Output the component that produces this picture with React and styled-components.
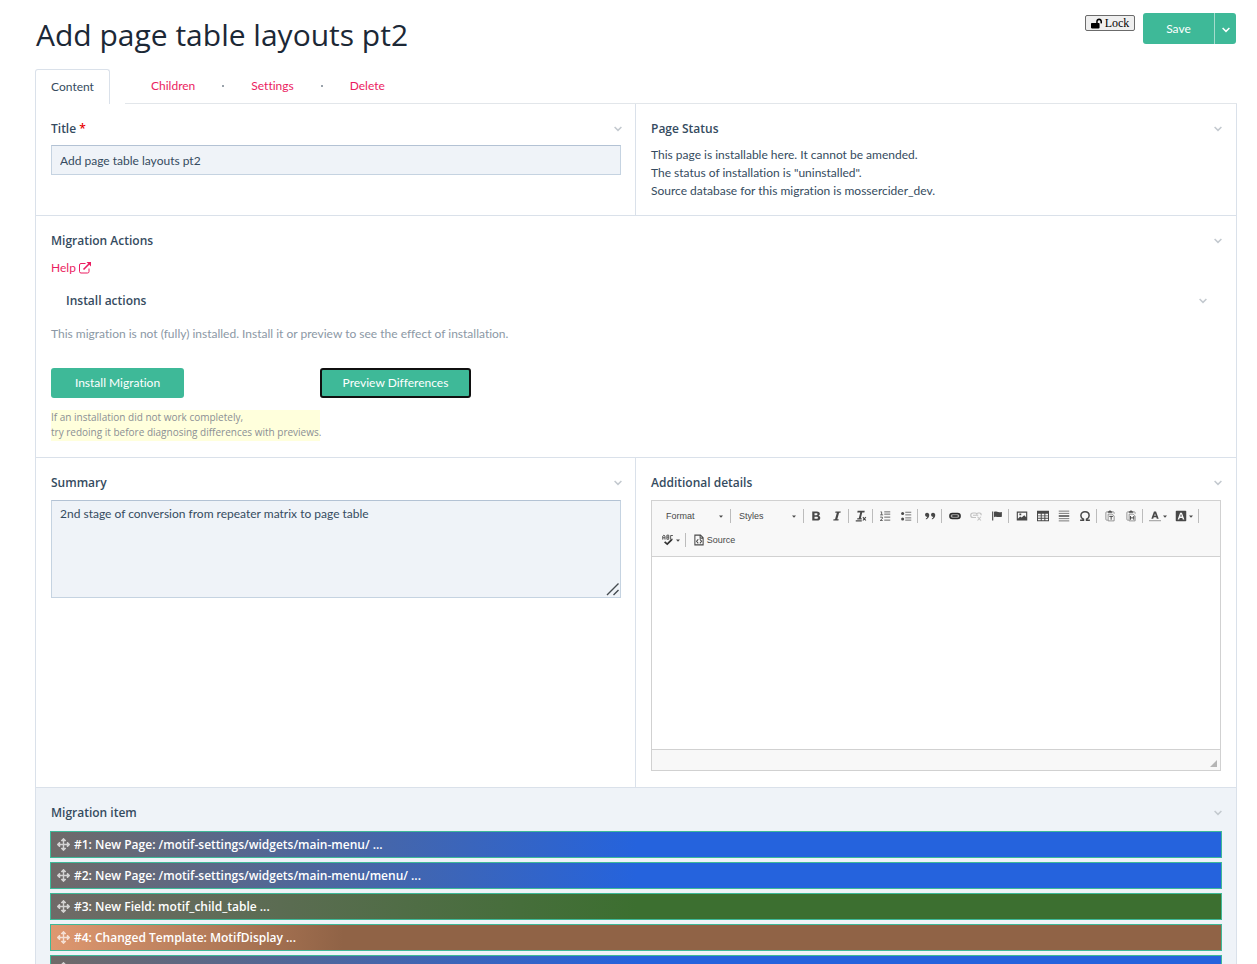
import React from 'react';
import styled, { createGlobalStyle, css } from 'styled-components';
import { FaLockOpen, FaArrowsAlt } from 'react-icons/fa';

const Global = createGlobalStyle`
  * { box-sizing: border-box; }
  body {
    margin: 0;
    background: #fff;
    color: #354b60;
    font: 12px/18px Lato, "Open Sans", sans-serif;
    font-variant-ligatures: none;
  }
  button, input, textarea, select { font: inherit; color: inherit; font-variant-ligatures: none; }
`;

const line = '#dae1ea';
const green = '#3eb998';
const pink = '#eb1d61';
const boldFace = css`
  font-family: "Open Sans", "Noto Sans", sans-serif;
  font-weight: 600;
`;

const Page = styled.div`
  height: 100vh;
  overflow: hidden;
  padding: 13px 20px 0 35px;
`;
const Header = styled.header`
  display: flex;
  align-items: flex-start;
  height: 56px;
`;
const Heading = styled.h1`
  flex: 1;
  margin: 0;
  padding-left: 1px;
  font-family: "Open Sans", "Noto Sans", sans-serif;
  font-size: 30px;
  line-height: 43px;
  font-weight: 400;
  color: #1c2836;
`;
const LockButton = styled.button`
  display: flex;
  align-items: center;
  justify-content: center;
  gap: 3px;
  width: 50px;
  height: 16px;
  margin: 2px 8px 0 0;
  padding: 0;
  border: 1px solid #6b6b6b;
  border-radius: 2px;
  background: #efefef;
  color: #000;
  font: 12px/14px "Liberation Serif", serif;
`;
const SaveGroup = styled.div`
  display: flex;
  height: 31px;
  margin-right: 1px;
  border-radius: 3px;
  overflow: hidden;
`;
const SaveButton = styled.button`
  width: 71px;
  padding: 0;
  border: 0;
  background: ${green};
  color: #fff;
`;
const SaveMore = styled(SaveButton)`
  width: 22px;
  border-left: 1px solid #a5dccd;
`;

const TabBar = styled.nav`
  display: flex;
  height: 35px;
`;
const ActiveTab = styled.a`
  width: 75px;
  margin-right: 15px;
  padding-top: 8px;
  border: 1px solid ${line};
  border-bottom: 0;
  border-radius: 3px 3px 0 0;
  text-align: center;
  text-decoration: none;
  color: #354b60;
`;
const TabList = styled.div`
  flex: 1;
  display: flex;
  align-items: center;
  gap: 27px;
  padding-left: 26px;
  border-bottom: 1px solid #e2e6ea;
`;
const TabLink = styled.a`
  color: ${pink};
  text-decoration: none;
`;
const Dot = styled.span`
  width: 2px;
  height: 2px;
  background: #9aa3ab;
`;

const Form = styled.main`
  border: solid ${line};
  border-width: 0 1px;
`;
const Row = styled.div`
  display: grid;
  grid-template-columns: ${(p) => (p.$split ? 'calc(50% - 1px) minmax(0, 1fr)' : 'minmax(0, 1fr)')};
  border-bottom: 1px solid ${line};
`;
const Cell = styled.section`
  padding: 15px 15px ${(p) => p.$bottom || 16}px;
  background: ${(p) => (p.$shaded ? '#eff3f8' : '#fff')};
  & + & { border-left: 1px solid ${line}; }
  ${Row} > &:first-child:not(:last-child) { padding-right: 14px; }
`;
const LabelRow = styled.div`
  ${boldFace}
  display: flex;
  align-items: center;
  justify-content: space-between;
  height: 20px;
  margin: 0 -1px ${(p) => p.$gap || 7}px 0;
  padding: 0 ${(p) => (p.$inset ? 15 : 0)}px;
  color: #354b60;
`;
const Required = styled.span`
  color: #e80000;
`;
const StatusText = styled.p`
  margin: 0;
  color: #354b60;
`;
const fieldBox = css`
  display: block;
  width: 100%;
  margin: 0;
  border: 1px solid #c5d3e1;
  border-top-color: #b3c2d4;
  border-radius: 0;
  outline: 0;
  background: #eff3f8;
`;
const TextInput = styled.input`
  ${fieldBox}
  height: 30px;
  padding: 0 8px;
`;
const AreaWrap = styled.div`
  position: relative;
`;
const TextArea = styled.textarea`
  ${fieldBox}
  height: 98px;
  padding: 4px 8px;
  resize: none;
`;
const Grip = styled.svg`
  position: absolute;
  right: 1px;
  bottom: 2px;
`;
const HelpLink = styled.a`
  display: flex;
  align-items: center;
  gap: 3px;
  height: 20px;
  width: max-content;
  margin-bottom: 13px;
  color: ${pink};
  text-decoration: none;
`;
const Muted = styled.p`
  margin: 0 0 24px;
  line-height: 20px;
  color: #8b98a5;
`;
const Actions = styled.div`
  display: flex;
  align-items: flex-start;
`;
const InstallColumn = styled.div`
  width: 269px;
`;
const ActionButton = styled.button`
  width: ${(p) => (p.$focused ? 151 : 133)}px;
  height: 30px;
  padding: 0;
  border: ${(p) => (p.$focused ? '2px solid #101010' : '0')};
  border-radius: 3px;
  background: ${green};
  color: #fff;
`;
const Note = styled.p`
  margin: 12px 0 0;
  background: #ffffdc;
  color: #8b8f94;
  font-family: "Open Sans", "Noto Sans", sans-serif;
  font-size: 10px;
  line-height: 15px;
  padding-bottom: 1px;
  white-space: nowrap;
`;

const Editor = styled.div`
  border: 1px solid #d1d1d1;
`;
const Toolbar = styled.div`
  height: 56px;
  padding: 3px 6px 0;
  border-bottom: 1px solid #d1d1d1;
  background: #f8f8f8;
  color: #484848;
  font: 9px/12px "Liberation Sans", sans-serif;
`;
const ToolRow = styled.div`
  display: flex;
  align-items: center;
  height: 24px;
`;
const Tool = styled.button`
  display: flex;
  flex: none;
  align-items: center;
  justify-content: center;
  gap: 2px;
  width: ${(p) => p.$w || 21}px;
  height: 20px;
  padding: 0;
  border: 0;
  background: none;
  opacity: ${(p) => (p.$dim ? 0.3 : 1)};
`;
const Separator = styled.span`
  flex: none;
  width: 1px;
  height: 14px;
  margin: 0 ${(p) => (p.$wide ? 2 : 1)}px 0 1px;
  background: #bcbcbc;
`;
const Combo = styled.label`
  flex: none;
  display: flex;
  align-items: center;
  width: ${(p) => p.$w}px;
  padding: 0 6px 0 ${(p) => p.$left}px;
`;
const Select = styled.select`
  flex: 1;
  min-width: 0;
  padding: 0;
  border: 0;
  appearance: none;
  background: none;
`;
const EditArea = styled.textarea`
  display: block;
  width: 100%;
  height: 192px;
  border: 0;
  outline: 0;
  resize: none;
  background: #fff;
`;
const EditorFoot = styled.div`
  display: flex;
  justify-content: flex-end;
  align-items: flex-end;
  height: 21px;
  padding: 3px;
  border-top: 1px solid #d1d1d1;
  background: #f8f8f8;
`;

const ItemList = styled.ul`
  display: flex;
  flex-direction: column;
  gap: 4px;
  margin: 0 -1px;
  padding: 0;
  list-style: none;
`;
const fills = {
  page: 'linear-gradient(95deg, #6f6a68, #2563dd 50%)',
  field: 'linear-gradient(95deg, #6f6a68, #3c6f30 50%)',
  template: 'linear-gradient(95deg, #df9870, #906346 25%)',
};
const Item = styled.li`
  ${boldFace}
  display: flex;
  align-items: center;
  gap: 4px;
  height: 27px;
  padding: 0 7px 0 6px;
  border: 1px solid ${green};
  background: ${(p) => fills[p.$kind]};
  color: #fff;
  svg { opacity: 0.7; }
`;

const Chevron = ({ color = '#c3c9cf' }) => (
  <svg width="8" height="6" viewBox="0 0 8 6" fill="none" stroke={color} strokeWidth="1.5" aria-hidden="true">
    <path d="M.6 1 4 4.400 7.400 1" />
  </svg>
);
const Caret = () => (
  <svg width="4" height="3" viewBox="0 0 4 3" aria-hidden="true">
    <path d="M0 .5h4L2 2.700z" fill="#484848" />
  </svg>
);
const External = () => (
  <svg width="12" height="12" viewBox="0 0 12 12" fill="none" stroke={pink} aria-hidden="true">
    <path d="M6.500 1.500H2A1.500 1.500 0 0 0 .5 3v6.500A1.500 1.500 0 0 0 2 11h6.500a1.500 1.500 0 0 0 1.500-1.500V6.500" />
    <path d="m4.500 7.500 5.500-5.500" strokeWidth="1.600" />
    <path d="M7.500 0H12v4.500z" fill={pink} stroke="none" />
  </svg>
);

const Clipboard = (
  <>
    <path d="M5 2.500H3.500a1 1 0 0 0-1 1v9a1 1 0 0 0 1 1H5M11 2.500h1.500a1 1 0 0 1 1 1V5" fill="none" stroke="#777" />
    <path d="M5 1.500h6v2.300H5zM7 .5h2v2H7z" />
    <path d="M5.500 5.500h5.500l2.500 2.500v6.500h-8z" fill="#f8f8f8" stroke="#777" />
  </>
);
const glyphs = {
  bold: <path fillRule="evenodd" d="M3 2h6.200c2.500 0 3.900 1.200 3.900 3.100 0 1.300-.7 2.200-1.900 2.600 1.600.3 2.500 1.400 2.500 2.900 0 2.200-1.600 3.400-4.400 3.400H3zm3 2.200v2.700h2.400c1.100 0 1.700-.5 1.700-1.400 0-.9-.6-1.300-1.700-1.300zm0 4.700v2.900h2.700c1.200 0 1.900-.5 1.900-1.500 0-.9-.7-1.400-1.900-1.400z" />,
  italic: <path d="M6 2h7l-.4 1.700h-1.800L8.400 12.300h1.900L9.900 14H3l.4-1.700h2L7.800 3.700H5.600z" />,
  clear: (
    <>
      <path d="M3.500 1h9.500l-.5 2.200H9.600L7.800 11H9v1.800H3V11h2L7 3.200H3z" />
      <path d="m10.500 9.500 4 4.500m0-4.500-4 4.500M1 14.500h8" fill="none" stroke="#484848" strokeWidth="1.500" />
    </>
  ),
  numbered: (
    <path d="M7 2.500h8M7 5.500h8M7 9.500h8M7 13.500h8M2 2.500h1.500v4M1.500 6.500h4M1.500 9.500h3v2l-3 2.500H5" fill="none" stroke="#5a5a5a" strokeWidth="1.200" />
  ),
  bullets: (
    <>
      <path d="M7 3h8M7 6.500h8M7 10.500h8M7 13.500h8" fill="none" stroke="#666" strokeWidth="1.200" />
      <circle cx="3.500" cy="4.700" r="2" /><circle cx="3.500" cy="12" r="2" />
    </>
  ),
  quote: (
    <path d="M4 3.500c2 0 3 1.400 3 3.300 0 3-1.700 5-4.500 6v-1.600c1.200-.6 1.800-1.400 1.900-2.200-1.900 0-3-1.100-3-2.700C1.400 4.600 2.500 3.500 4 3.500zm8 0c2 0 3 1.400 3 3.300 0 3-1.700 5-4.500 6v-1.600c1.200-.6 1.800-1.400 1.900-2.200-1.900 0-3-1.100-3-2.700 0-1.700 1.100-2.800 2.600-2.800z" />
  ),
  link: (
    <>
      <path d="M4.500 4.700h7a3.300 3.300 0 0 1 0 6.600h-7a3.300 3.300 0 0 1 0-6.600z" fill="#aaa" stroke="#2c2c2c" strokeWidth="2" />
      <path d="M4.500 7h7v2h-7z" fill="#222" />
    </>
  ),
  unlink: (
    <>
      <path d="M8 10H4a3 3 0 0 1 0-6h3a2 2 0 0 1 2 2 2 2 0 0 1 2-2h1.500a2 2 0 0 1 2 3M4 7h7" fill="none" stroke="#484848" strokeWidth="1.600" />
      <path d="m10 9 4.500 5m0-5L10 14" fill="none" stroke="#484848" strokeWidth="1.400" />
    </>
  ),
  flag: <path d="M1.500 2h1.500v12H1.500zM4 2.500c3-1.300 4.500 1.300 10.500 0V9c-5 1.500-7.500-1.200-10.500.5z" />,
  image: <path fillRule="evenodd" d="M1 2h14v12H1zm1.500 1.500v8l3-3 2 1.500 3.500-3 2.500 2.500V3.500zm2 1h2.500v2.500H4.500z" />,
  table: <path fillRule="evenodd" d="M0 1h16v14H0zm1.300 4v2.200h3.700V5zm5 0v2.200h3.500V5zm4.800 0v2.200h3.600V5zM1.300 8.400v2h3.700v-2zm5 0v2h3.500v-2zm4.800 0v2h3.600v-2zM1.300 11.700v2h3.700v-2zm5 0v2h3.500v-2zm4.800 0v2h3.600v-2z" />,
  rule: (
    <>
      <path d="M1 1.500h14M1 4.500h14M1 11.500h14M1 14.500h14" fill="none" stroke="#777" strokeWidth="1.300" />
      <path d="M1 7h14v2H1z" />
    </>
  ),
  omega: <path d="M1.500 13.500H6v-1.200C3.800 11.200 2.500 9.700 2.500 7.500 2.500 4.300 4.800 2.300 8 2.300s5.500 2 5.500 5.200c0 2.200-1.300 3.700-3.500 4.800v1.200h4.500" fill="none" stroke="#484848" strokeWidth="2" />,
  pasteText: <>{Clipboard}<path d="M7 8.500h5M9.500 8.500v4.500" fill="none" stroke="#484848" strokeWidth="1.300" /></>,
  pasteWord: <>{Clipboard}<path d="M7.300 8v5M11.700 8v5M7.300 10.500h4.400" fill="none" stroke="#484848" strokeWidth="1.300" /></>,
  color: (
    <>
      <path fillRule="evenodd" d="M6.600 2h2.800l3.500 9.500h-2.500l-.7-2H6.300l-.7 2H3.100zm.4 5.500h2L8 4.600z" />
      <path d="M0 14.200h16" stroke="#aaa" strokeWidth="1.600" />
    </>
  ),
  fill: <path fillRule="evenodd" d="M2 1h12a1 1 0 0 1 1 1v12a1 1 0 0 1-1 1H2a1 1 0 0 1-1-1V2a1 1 0 0 1 1-1zm4.800 2.500L3.500 12.500h2.100l.6-2h3.600l.6 2h2.100L9.200 3.500zm0 5.300L8 5.300l1.200 3.500z" />,
  spell: (
    <>
      <path d="M1 7.500V2.800L2.500 1.500 4 2.800v4.700M1 5h3M6.500 1.500v5.500h2.500V1.500zM6.500 4.200H9M14.500 2h-3v5h3" fill="none" stroke="#484848" strokeWidth="1.200" />
      <path d="m3.500 10.500 3.500 3 6-6" fill="none" stroke="#333" strokeWidth="2.400" />
    </>
  ),
  source: (
    <path d="M2.500 1.500h7.500l3.500 3.500v9.500h-11zM9.500 1.500V5.500h4M7 7l-2.200 2.800L7 12.500M9.200 7l2.200 2.800-2.200 2.700" fill="none" stroke="#484848" strokeWidth="1.400" />
  ),
};
const Glyph = ({ name }) => (
  <svg width="12" height="12" viewBox="0 0 16 16" fill="#484848" aria-hidden="true">{glyphs[name]}</svg>
);

const groups = [
  ['bold', 'italic'],
  ['clear'],
  ['numbered', 'bullets'],
  ['quote'],
  ['link', 'unlink', 'flag'],
  ['image', 'table', 'rule', 'omega'],
  ['pasteText', 'pasteWord'],
];
const items = [
  ['page', '#1: New Page: /motif-settings/widgets/main-menu/ ...'],
  ['page', '#2: New Page: /motif-settings/widgets/main-menu/menu/ ...'],
  ['field', '#3: New Field: motif_child_table ...'],
  ['template', '#4: Changed Template: MotifDisplay ...'],
  ['page', ''],
];

export default function App() {
  return (
    <Page>
      <Global />
      <Header>
        <Heading>Add page table layouts pt2</Heading>
        <LockButton type="button"><FaLockOpen size={11} />Lock</LockButton>
        <SaveGroup>
          <SaveButton type="button">Save</SaveButton>
          <SaveMore type="button" aria-label="More save options"><Chevron color="#fff" /></SaveMore>
        </SaveGroup>
      </Header>
      <TabBar>
        <ActiveTab href="#content">Content</ActiveTab>
        <TabList>
          <TabLink href="#children">Children</TabLink>
          <Dot />
          <TabLink href="#settings">Settings</TabLink>
          <Dot />
          <TabLink href="#delete">Delete</TabLink>
        </TabList>
      </TabBar>
      <Form>
        <Row $split>
          <Cell $bottom={40}>
            <LabelRow $gap={6}><label htmlFor="title">Title <Required>*</Required></label><Chevron /></LabelRow>
            <TextInput id="title" defaultValue="Add page table layouts pt2" />
          </Cell>
          <Cell $bottom={15}>
            <LabelRow>Page Status<Chevron /></LabelRow>
            <StatusText>
              This page is installable here. It cannot be amended.<br />
              The status of installation is "uninstalled".<br />
              Source database for this migration is mossercider_dev.
            </StatusText>
          </Cell>
        </Row>
        <Row>
          <Cell>
            <LabelRow>Migration Actions<Chevron /></LabelRow>
            <HelpLink href="#help">Help <External /></HelpLink>
            <LabelRow $inset $gap={13}>Install actions<Chevron /></LabelRow>
            <Muted>This migration is not (fully) installed. Install it or preview to see the effect of installation.</Muted>
            <Actions>
              <InstallColumn>
                <ActionButton type="button">Install Migration</ActionButton>
                <Note>If an installation did not work completely,<br />try redoing it before diagnosing differences with previews.</Note>
              </InstallColumn>
              <ActionButton type="button" $focused>Preview Differences</ActionButton>
            </Actions>
          </Cell>
        </Row>
        <Row $split>
          <Cell>
            <LabelRow><label htmlFor="summary">Summary</label><Chevron /></LabelRow>
            <AreaWrap>
              <TextArea id="summary" defaultValue="2nd stage of conversion from repeater matrix to page table" />
              <Grip width="14" height="14" viewBox="0 0 14 14" stroke="#454b50" strokeWidth="1.400" aria-hidden="true">
                <path d="M1 13 12.500 1.500M7.500 13l5-5" />
              </Grip>
            </AreaWrap>
          </Cell>
          <Cell>
            <LabelRow><label htmlFor="details">Additional details</label><Chevron /></LabelRow>
            <Editor>
              <Toolbar>
                <ToolRow>
                  <Combo $w={71} $left={8}>
                    <Select aria-label="Format"><option>Format</option></Select><Caret />
                  </Combo>
                  <Separator />
                  <Combo $w={70} $left={7}>
                    <Select aria-label="Styles"><option>Styles</option></Select><Caret />
                  </Combo>
                  <Separator />
                  {groups.map((g, i) => (
                    <React.Fragment key={g[0]}>
                      {g.map((name) => (
                        <Tool type="button" key={name} aria-label={name} $dim={name === 'unlink'}><Glyph name={name} /></Tool>
                      ))}
                      <Separator $wide={i > 2} />
                    </React.Fragment>
                  ))}
                  <Tool type="button" $w={26} aria-label="Text colour"><Glyph name="color" /><Caret /></Tool>
                  <Tool type="button" $w={26} aria-label="Background colour"><Glyph name="fill" /><Caret /></Tool>
                  <Separator />
                </ToolRow>
                <ToolRow>
                  <Tool type="button" $w={26} aria-label="Spell check"><Glyph name="spell" /><Caret /></Tool>
                  <Separator />
                  <Tool type="button" $w={54}><Glyph name="source" />Source</Tool>
                </ToolRow>
              </Toolbar>
              <EditArea id="details" />
              <EditorFoot>
                <svg width="7" height="7" viewBox="0 0 7 7" aria-hidden="true"><path d="M7 0v7H0z" fill="#b5b5b5" /></svg>
              </EditorFoot>
            </Editor>
          </Cell>
        </Row>
        <Row>
          <Cell $shaded>
            <LabelRow $gap={8}>Migration item<Chevron /></LabelRow>
            <ItemList>
              {items.map(([kind, text], i) => (
                <Item key={i} $kind={kind}><FaArrowsAlt size={13} />{text}</Item>
              ))}
            </ItemList>
          </Cell>
        </Row>
      </Form>
    </Page>
  );
}
